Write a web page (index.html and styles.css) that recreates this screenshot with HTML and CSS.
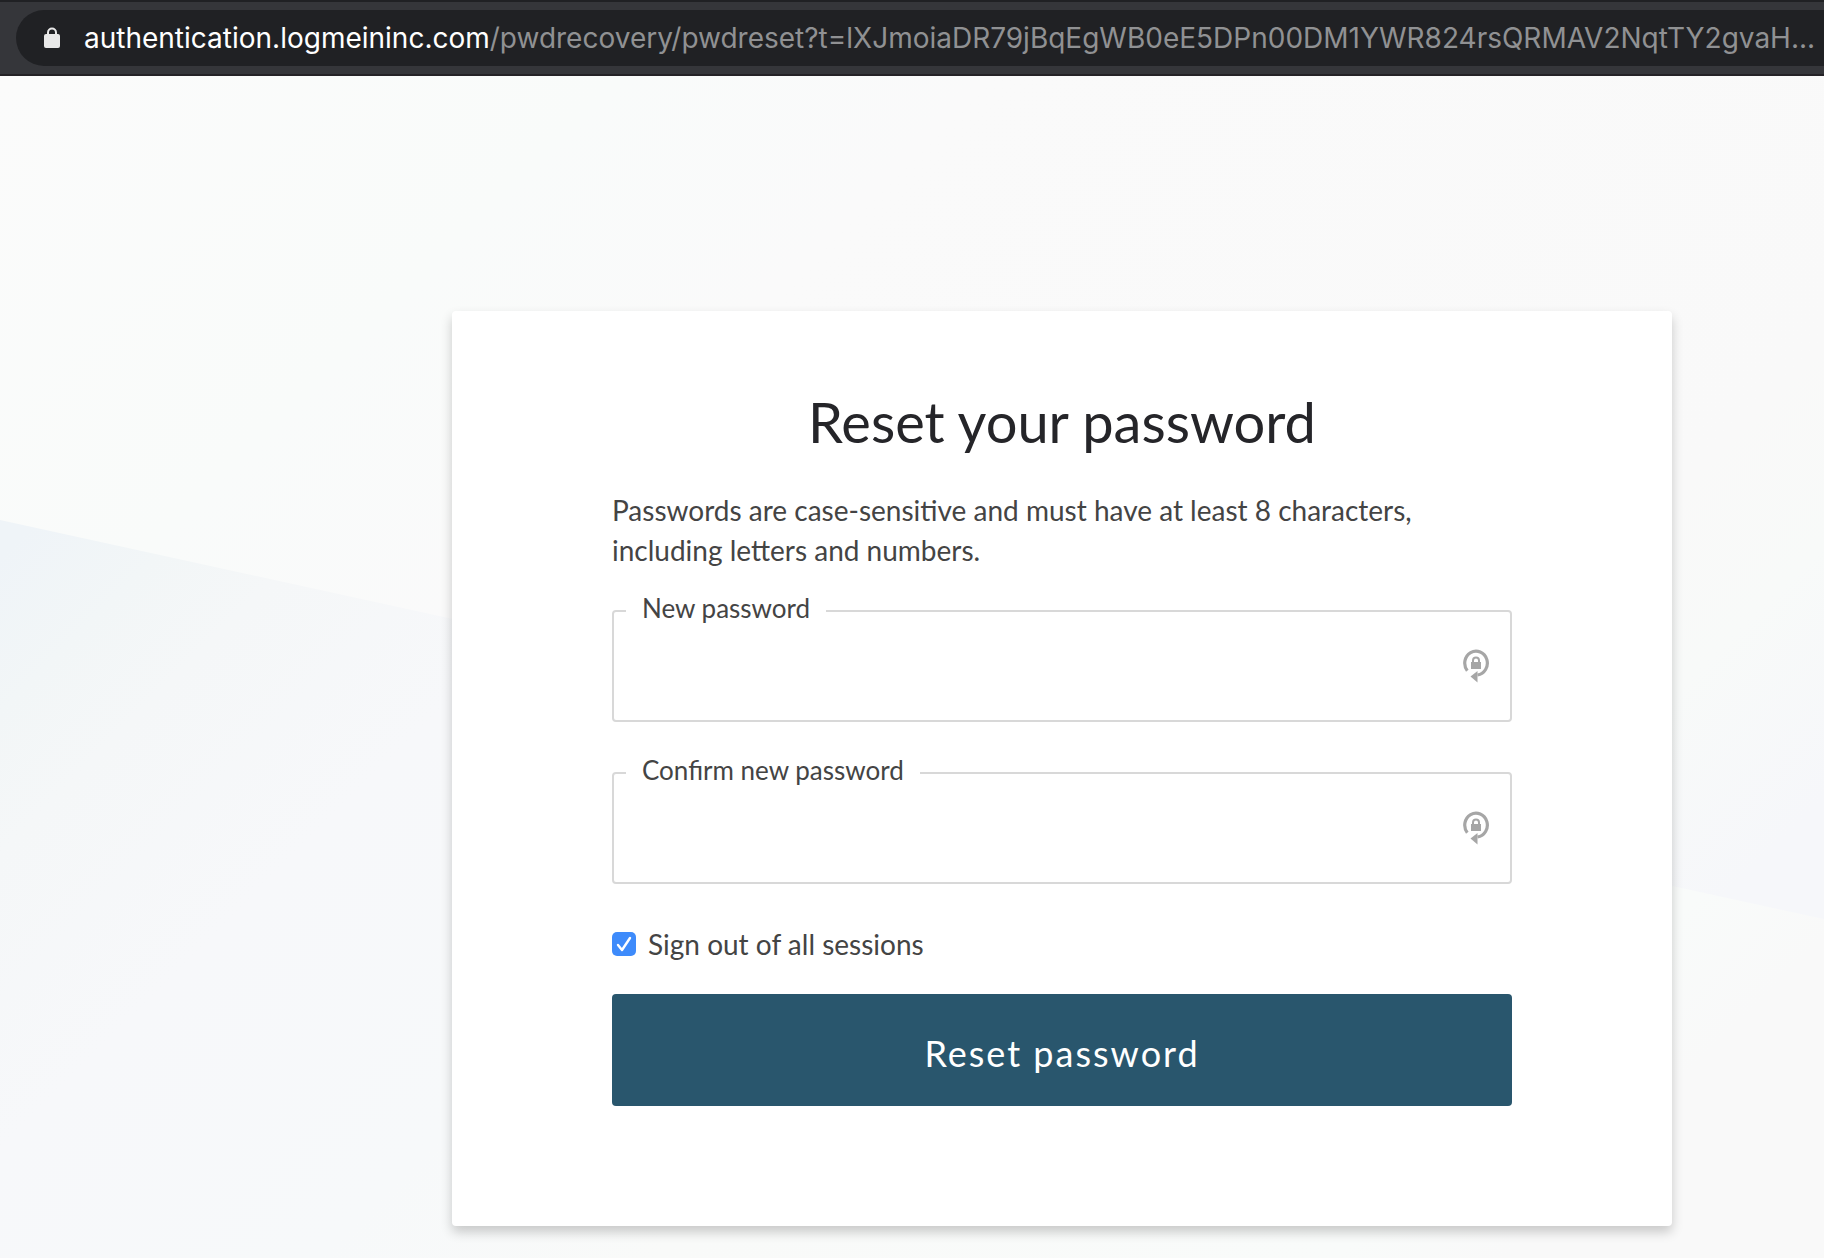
FILE: index.html
```html
<!DOCTYPE html>
<html lang="en">

<head>
    <meta charset="utf-8">
    <meta name="viewport" content="width=device-width, initial-scale=1.0">
    <title>Reset your password</title>
    <link rel="stylesheet" href="styles.css">
</head>

<body>
    <header class="toolbar">
        <div class="address">
            <svg class="lock" viewBox="0 0 16 22" aria-hidden="true">
                <path d="M4 9V5.5a4 4 0 0 1 8 0V9" fill="none" stroke="#e8e8e8" stroke-width="2" />
                <rect y="7" width="16" height="14" rx="2" fill="#e8e8e8" />
            </svg>
            <div class="url"><span class="host">authentication.logmeininc.com</span>/pwdrecovery/pwdreset?t=lXJmoiaDR79jBqEgWB0eE5DPn00DM1YWR824rsQRMAV2NqtTY2gvaH...</div>
        </div>
    </header>

    <main>
        <form class="card">
            <h1>Reset your password</h1>
            <p>Passwords are case-sensitive and must have at least 8 characters, including letters and numbers.</p>

            <div class="field">
                <label for="newPassword">New password</label>
                <input type="password" id="newPassword" name="newPassword">
                <svg class="vault" viewBox="0 0 26 34" aria-hidden="true">
                    <path d="M4.3 21.7A11.3 12 0 1 1 14.500 26" fill="none" stroke="#a6a6a6" stroke-width="3.2" />
                    <path d="M7.5 27.5L14.500 22v11.500z" fill="#a6a6a6" />
                    <path d="M10 14v-2.500a3 3 0 0 1 6 0v2.500" fill="none" stroke="#a6a6a6" stroke-width="2" />
                    <rect x="8" y="13" width="10" height="7" fill="#a6a6a6" />
                </svg>
            </div>

            <div class="field">
                <label for="confirmPassword">Confirm new password</label>
                <input type="password" id="confirmPassword" name="confirmPassword">
                <svg class="vault" viewBox="0 0 26 34" aria-hidden="true">
                    <path d="M4.3 21.7A11.3 12 0 1 1 14.500 26" fill="none" stroke="#a6a6a6" stroke-width="3.2" />
                    <path d="M7.5 27.5L14.500 22v11.500z" fill="#a6a6a6" />
                    <path d="M10 14v-2.500a3 3 0 0 1 6 0v2.500" fill="none" stroke="#a6a6a6" stroke-width="2" />
                    <rect x="8" y="13" width="10" height="7" fill="#a6a6a6" />
                </svg>
            </div>

            <div class="check">
                <span class="box">
                    <input type="checkbox" id="signOut" name="signOut" checked>
                    <svg viewBox="0 0 24 24" aria-hidden="true">
                        <path d="M6 13L10 18L18 6" />
                    </svg>
                </span>
                <label for="signOut">Sign out of all sessions</label>
            </div>

            <button type="submit">Reset password</button>
        </form>
    </main>
</body>

</html>
```
FILE: styles.css
```css
* {
    box-sizing: border-box;
}

body {
    display: flex;
    flex-direction: column;
    min-height: 100vh;
    margin: 0;
    font-family: Lato, sans-serif;
    font-size: 28px;
    line-height: 40px;
    color: #444;
    background-color: #fafafa;
}

.toolbar {
    padding: 8px 0 8px 16px;
    border-top: 2px solid #202124;
    border-bottom: 2px solid #242226;
    background-color: #35363a;
}

.address {
    display: flex;
    align-items: center;
    gap: 24px;
    height: 56px;
    padding-left: 28px;
    border-radius: 28px 0 0 28px;
    background-color: #202124;
}

.lock {
    flex: none;
    width: 16px;
    height: 22px;
}

.url {
    overflow: hidden;
    font-family: Inter, sans-serif;
    white-space: nowrap;
    color: #909193;
}

.host {
    color: #fff;
}

main {
    position: relative;
    flex: 1;
    padding: 235px 152px 30px 452px;
    background: linear-gradient(135deg, #fbfbfb, #f9fbfa 440px, #fafafa 700px, #f9f9f9 1480px, #f8faf9 1620px, #f6f7fa 1800px);
}

/* tinted half below the slanted line */
main::before {
    content: "";
    position: absolute;
    inset: 0;
    background: linear-gradient(135deg, #eff4f8 340px, #f2f6f7 450px, #f5f7f8 550px, #f7f8fa 760px, #f7f9fa 1060px, #f9faf9 1300px, #f9fbfa 1780px, #f9f9f9 1900px);
    clip-path: polygon(0 444px, 100% 843px, 100% 100%, 0 100%);
}

.card {
    position: relative;
    padding: 77px 160px 120px;
    border-radius: 4px;
    background-color: #fff;
    box-shadow: 0 6px 12px rgba(0, 0, 0, 0.2);
}

h1 {
    margin: 0 0 34px;
    font-size: 56px;
    font-weight: normal;
    line-height: 68px;
    text-align: center;
    color: #252529;
}

p {
    max-width: 820px;
    margin: 0 0 40px;
}

.field {
    position: relative;
}

.field + .field {
    margin-top: 50px;
}

.field label {
    position: absolute;
    top: -18px;
    left: 14px;
    padding: 0 16px;
    font-size: 26px;
    line-height: 32px;
    background-color: #fff;
}

.field input {
    display: block;
    width: 100%;
    height: 112px;
    padding: 0 64px 0 28px;
    border: 2px solid #d8d8d8;
    border-radius: 4px;
    font: inherit;
    color: inherit;
    background-color: #fff;
}

.vault {
    position: absolute;
    top: 39px;
    right: 23px;
    width: 26px;
    height: 34px;
}

.check {
    display: flex;
    align-items: center;
    gap: 12px;
    margin: 40px 0 30px;
}

.box {
    display: grid;
    width: 24px;
    height: 24px;
}

.box input,
.box svg {
    grid-area: 1 / 1;
    width: 24px;
    height: 24px;
    margin: 0;
}

.box input {
    appearance: none;
    border-radius: 5px;
    background-color: #a8a8a8;
}

.box input:checked {
    background-color: #3e8bfb;
}

.box svg {
    fill: none;
    stroke: #fff;
    stroke-width: 2.4;
    stroke-linecap: round;
    stroke-linejoin: round;
    pointer-events: none;
}

button {
    width: 100%;
    height: 112px;
    padding: 5px 0 0;
    border: none;
    border-radius: 4px;
    font-family: inherit;
    font-size: 36px;
    letter-spacing: 2px;
    color: #fff;
    background-color: #29566d;
    cursor: pointer;
}

button:hover {
    background-color: #1f4559;
}
```
